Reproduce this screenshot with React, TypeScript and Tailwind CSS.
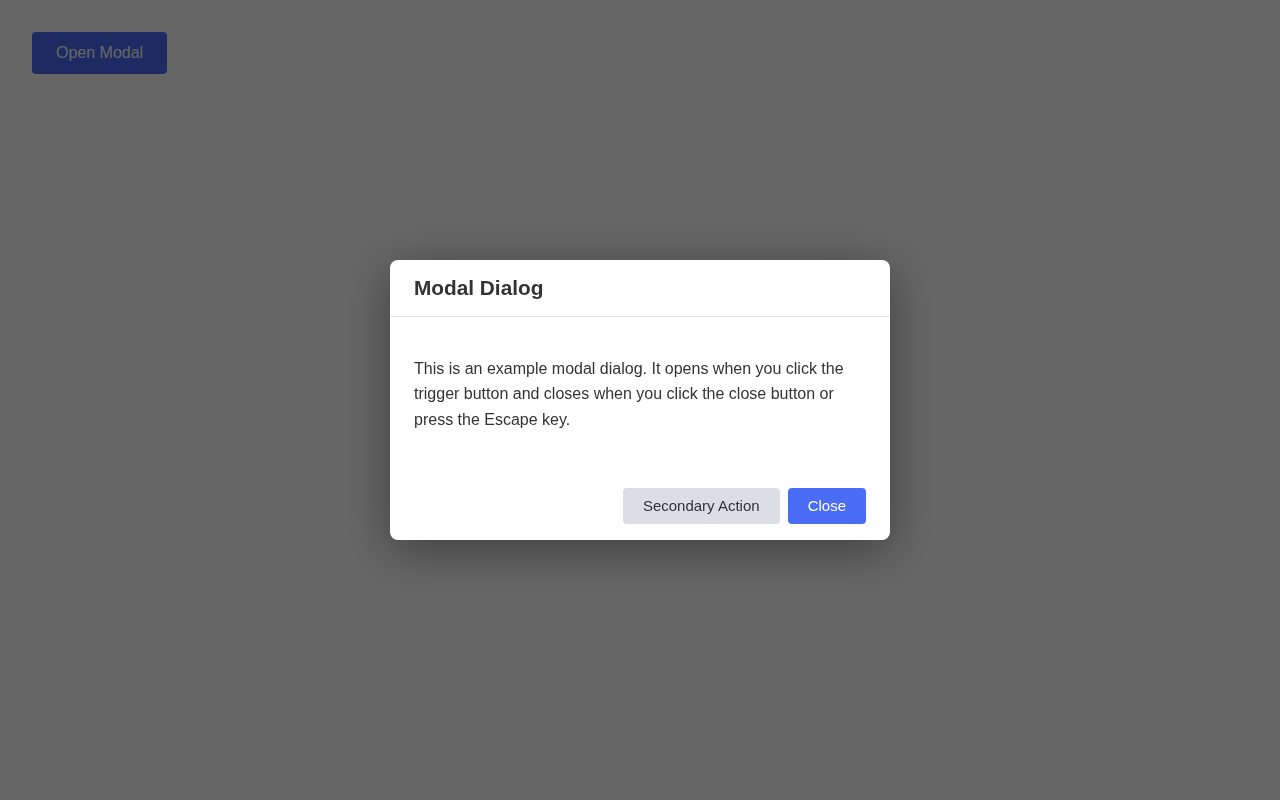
import { useEffect, useState } from 'react';

export default function App() {
  const [open, setOpen] = useState(true);

  useEffect(() => {
    const onKey = (e: KeyboardEvent) => {
      if (e.key === 'Escape') setOpen(false);
    };
    window.addEventListener('keydown', onKey);
    return () => window.removeEventListener('keydown', onKey);
  }, []);

  return (
    <div className="min-h-screen bg-white p-8 font-['Liberation_Sans',Arial,sans-serif]">
      <button
        onClick={() => setOpen(true)}
        className="h-[42px] px-6 rounded-[4px] bg-[#4b6cf7] text-white text-[16px]"
      >
        Open Modal
      </button>

      {open && (
        <div className="fixed inset-0 bg-[rgba(0,0,0,0.6)] flex items-center justify-center">
          <div
            role="dialog"
            className="w-[500px] bg-white rounded-lg shadow-[0_10px_50px_rgba(0,0,0,0.4)] text-[#333]"
          >
            <div className="px-6 py-4 border-b border-[#e5e5e5]">
              <h2 className="text-[20.8px] leading-6 font-bold">Modal Dialog</h2>
            </div>
            <div className="px-6 py-[39px]">
              <p className="text-[16px] leading-[25.6px]">
                This is an example modal dialog. It opens when you click the trigger button and closes
                when you click the close button or press the Escape key.
              </p>
            </div>
            <div className="flex justify-end gap-2 px-6 pt-[17px] pb-4">
              <button className="h-9 px-5 rounded-[4px] bg-[#dcdee5] text-[#333] text-[15px]">
                Secondary Action
              </button>
              <button
                onClick={() => setOpen(false)}
                className="h-9 px-5 rounded-[4px] bg-[#4b6cf7] text-white text-[15px]"
              >
                Close
              </button>
            </div>
          </div>
        </div>
      )}
    </div>
  );
}
